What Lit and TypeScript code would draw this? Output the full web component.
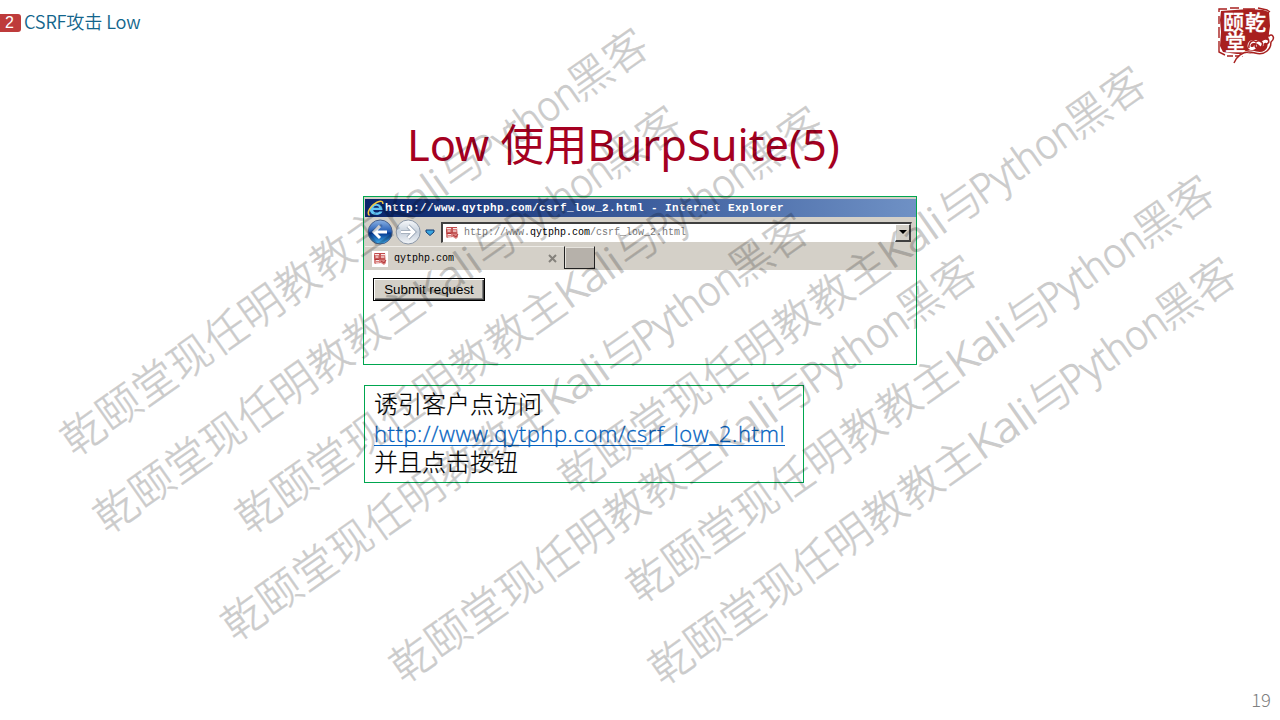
import { LitElement, html, css, svg } from "lit";
import { customElement } from "lit/decorators.js";

// Centre of the first glyph of every watermark line.
const MARKS: [number, number][] = [
  [83, 432], [116, 509.5], [258, 510], [243.5, 617],
  [412, 659], [581, 470], [649, 579], [671, 661],
];
const ANGLE = -35.1;

@customElement("site-seal")
export class SiteSeal extends LitElement {
  static styles = css`:host { display: block; } svg { display: block; }
    text { font-family: "Noto Sans CJK SC", sans-serif; font-weight: 500; fill: #fff; stroke: #fff; stroke-width: 0.3px; }`;
  render() {
    return html`<svg width="62" height="58" viewBox="0 0 62 58">
      <path d="M6 5L20 4L34 3L48 4L54 6L55 20L53 34L56 38L52 46L44 48L22 48L8 46L5 40L6 26L5 14Z" fill="#a8201f"/>
      <path d="M4 6L4 3H12M15 2H24M28 3H40M43 2L52 4L55 6M4 10V18M4 21V32M4 35L4 46L10 49M12 50H18M20 50H28" fill="none" stroke="#a8201f" stroke-width="1.4"/>
      <text x="8" y="24" font-size="21">颐</text>
      <text x="30" y="24" font-size="21">乾</text>
      <text x="10" y="44" font-size="21">堂</text>
      <path d="M22 56C26 46 34 45 41 47C48 49 54 45 54 39C53 33 46 35 47 40C42 33 34 35 34 40C34 44 42 43 40 39" fill="none" stroke="#fff" stroke-width="3"/>
      <path d="M19 57C23 48 30 44 40 47C50 50 56 43 56 36C61 32 57 27 54 30C52 26 47 28 47 32M34 42C33 36 38 33 41 36C45 33 50 37 46 41C43 44 38 41 41 38M50 32C55 31 55 39 50 38" fill="none" stroke="#a8201f" stroke-width="1.5"/>
    </svg>`;
  }
}

@customElement("seal-icon")
export class SealIcon extends LitElement {
  static styles = css`:host { display: block; flex: none; } svg { display: block; }`;
  render() {
    return html`<svg width="16" height="16" viewBox="0 0 16 16">
      <rect width="16" height="16" fill="#fff"/>
      <path d="M2 2H13L14 12L12 14L9 12L3 13L2 12Z" fill="#d8817f"/>
      <path d="M3 3.5H7M4 6H6M9 3.5H13M9 6H12M4 9.5H7M4 12H7" stroke="#fbe4e4" stroke-width="1"/>
      <path d="M8 2V8H2M8 8L13 8M3 8.5L7 8.5M9 10L12 12L14 9" fill="none" stroke="#b23335" stroke-width="1"/>
      <path d="M3 2.5L13 2.5M2.5 4V7" stroke="#c04a4b" stroke-width="1"/>
    </svg>`;
  }
}

@customElement("browser-shot")
export class BrowserShot extends LitElement {
  static styles = css`
    :host { display: block; box-sizing: border-box; width: 554px; height: 169px; border: 1px solid #00a64f; background: #fff; font-family: "Liberation Mono", monospace; white-space: nowrap; }
    .frame { background: #d4d0c8; height: 73px; padding: 2px 0 0 1px; box-sizing: border-box; }
    .title { height: 18px; display: flex; align-items: center; background: linear-gradient(90deg, #0a246a, #3a5b9b 48%, #6f91c5); color: #fff; }
    .title svg { display: block; flex: none; margin-left: 2px; }
    .caption { font-weight: 700; font-size: 11px; letter-spacing: 0.4px; line-height: 18px; }
    .bar { height: 29px; display: flex; align-items: center; padding-left: 2px; }
    .nav { display: block; flex: none; }
    .address { box-sizing: border-box; width: 471px; height: 21px; margin: 1px 0 0 5px; background: #fff; border: 2px solid #404040; border-right: 1px solid #d4d0c8; border-bottom: 1px solid #d4d0c8; display: flex; align-items: center; padding-left: 1px; }
    .url { flex: 1; margin-left: 4px; font-size: 10px; line-height: 17px; color: #777; }
    .url b { font-weight: 400; color: #000; }
    .drop { box-sizing: border-box; width: 16px; height: 18px; background: #d4d0c8; border: 1px solid #fff; border-right: 2px solid #404040; border-bottom: 2px solid #404040; display: grid; place-items: center; }
    .tabs { display: flex; height: 24px; }
    .tab { width: 199px; display: flex; align-items: center; padding-left: 7px; box-sizing: border-box; border-top: 1px solid #eeece7; }
    .name { flex: 1; font-size: 10px; margin-left: 6px; line-height: 24px; color: #000; }
    .close { margin-right: 7px; display: block; }
    .new { width: 31px; height: 23px; box-sizing: border-box; background: #b6b1aa; border: 1px solid #d4d0c8; border-left: 1px solid #222; border-right: 1px solid #222; border-bottom: 1px solid #222; box-shadow: inset 1px 1px #e6e3dd; }
    .page { padding: 8px 0 0 9px; }
    .submit { box-sizing: border-box; width: 112px; height: 23px; border: 1px solid #000; background: #d4d0c8; box-shadow: inset 1px 1px #fff, inset -1px -1px #404040, inset -2px -2px #808080; font: 13.33px/21px "Liberation Sans", sans-serif; color: #000; text-align: center; }
  `;
  render() {
    return html`
      <div class="frame">
        <div class="title">
          <svg width="18" height="17" viewBox="0 0 18 17">
            <path d="M15.5 10H6.2C6.4 13 11.5 13.2 12.2 11.5H15.4C14 16.4 2.6 16.6 2.8 9.2C3 2.2 16 2.2 15.5 10ZM6.4 7.7H12.2C11.8 5 6.9 5 6.4 7.7Z" fill="#62c6f5" fill-rule="evenodd"/>
            <path d="M2.5 15.5C-1 13 4 5 10 2.2C13.5 .8 16.3 .8 15.8 4" fill="none" stroke="#f5c83c" stroke-width="1.5"/>
          </svg>
          <span class="caption">http://www.qytphp.com/csrf_low_2.html - Internet Explorer</span>
        </div>
        <div class="bar">
          <svg class="nav" width="69" height="28" viewBox="0 0 69 28">
            <defs>
              <linearGradient id="b" x2="0" y2="1"><stop stop-color="#8bb2e4"/><stop offset=".48" stop-color="#265eb5"/><stop offset=".55" stop-color="#053a91"/><stop offset="1" stop-color="#45b4f1"/></linearGradient>
              <linearGradient id="g" x2="0" y2="1"><stop stop-color="#f7f9fb"/><stop offset=".5" stop-color="#c5cfdb"/><stop offset="1" stop-color="#f2f5f8"/></linearGradient>
            </defs>
            <circle cx="13.2" cy="14" r="12" fill="url(#b)" stroke="#4a628c"/>
            <path d="M13 8L7 14L13 20M7.5 14H20" fill="none" stroke="#fff" stroke-width="3"/>
            <circle cx="41.2" cy="14" r="12" fill="url(#g)" stroke="#8a96a6"/>
            <path d="M41 8L47 14L41 20M34 14H46" fill="none" stroke="#8a98aa" stroke-width="4"/>
            <path d="M41 8L47 14L41 20M34 14H46" fill="none" stroke="#fff" stroke-width="2.6"/>
            <path d="M59 12H67V14L63 17.5L59 14Z" fill="#3aa6e0" stroke="#123d75"/>
          </svg>
          <div class="address">
            <seal-icon></seal-icon>
            <span class="url">http://www.<b>qytphp.com</b>/csrf_low_2.html</span>
            <div class="drop"><svg width="8" height="4"><path d="M0 0H8L4 4Z"/></svg></div>
          </div>
        </div>
        <div class="tabs">
          <div class="tab">
            <seal-icon></seal-icon><span class="name">qytphp.com</span>
            <svg class="close" width="9" height="9"><path d="M1 1L8 8M8 1L1 8" stroke="#85827c" stroke-width="2"/></svg>
          </div>
          <div class="new"></div>
        </div>
      </div>
      <div class="page"><div class="submit">Submit request</div></div>`;
  }
}

@customElement("app-root")
export class AppRoot extends LitElement {
  static styles = css`
    :host { display: block; position: relative; width: 1280px; height: 720px; overflow: hidden; background: #fff; font-family: "Noto Sans", "Noto Sans CJK SC", sans-serif; white-space: nowrap; }
    .slide { display: flex; flex-direction: column; height: 720px; }
    header { display: flex; align-items: flex-start; height: 115px; }
    .num { width: 21px; height: 18px; margin-top: 14px; padding-right: 2px; box-sizing: border-box; background: #be3b3b; border-radius: 0 3px 3px 0; color: #fff; font: 16px/17px "Liberation Sans", sans-serif; text-align: center; }
    .topic { flex: 1; margin: 7px 0 0 3px; font: 350 18.2px/28px "Noto Sans CJK SC", sans-serif; letter-spacing: -0.2px; color: #12658c; }
    site-seal { margin: 6px 3px 0 0; }
    h1 { margin: 0 0 0 407px; height: 81px; font-size: 43.4px; font-weight: 400; line-height: 60px; color: #a50021; }
    browser-shot { margin-left: 363px; flex: none; }
    .note { box-sizing: border-box; width: 440px; height: 98px; margin: 20px 0 0 364px; border: 1px solid #00a64f; padding: 2px 0 0 9px; font: 300 24px/29px "Noto Sans CJK SC", sans-serif; color: #000; -webkit-text-stroke: 0.2px; }
    .note div { height: 29px; }
    .link { display: inline-block; width: 411px; height: 27px; line-height: 29px; font-family: "Open Sans", sans-serif; font-size: 22px; letter-spacing: 0.58px; color: #0563c1; border-bottom: 1px solid #0563c1; box-sizing: border-box; -webkit-text-stroke: 0.3px; }
    footer { margin-top: auto; height: 35px; padding-right: 9px; text-align: right; font: 300 18.5px/28px "Noto Sans CJK SC", sans-serif; color: #808080; }
    .marks { position: absolute; inset: 0; pointer-events: none; }
    .marks text { font: 300 43px "Noto Sans CJK SC", sans-serif; fill: #000; stroke: #000; stroke-width: 0.5px; }
    .marks .latin { font: 300 41px "Open Sans", sans-serif; stroke-width: 1px; }
  `;
  render() {
    return html`
      <div class="slide">
        <header><div class="num">2</div><div class="topic">CSRF攻击 Low</div><site-seal></site-seal></header>
        <h1>Low 使用BurpSuite(5)</h1>
        <browser-shot></browser-shot>
        <div class="note"><div>诱引客户点访问</div><div><span class="link">http://www.qytphp.com/csrf_low_2.html</span></div><div>并且点击按钮</div></div>
        <footer>19</footer>
      </div>
      <svg class="marks" width="1280" height="720">
        ${MARKS.map(([x, y]) => svg`<g opacity="0.2" transform="translate(${x} ${y}) rotate(${ANGLE})">
          <text x="-21.5" y="16" textLength="391" lengthAdjust="spacing">乾颐堂现任明教教主</text>
          <text class="latin" x="369" y="15" textLength="71" lengthAdjust="spacingAndGlyphs">Kali</text>
          <text x="441" y="16">与</text>
          <text class="latin" x="481" y="15" textLength="119" lengthAdjust="spacingAndGlyphs">Python</text>
          <text x="598" y="16" textLength="86" lengthAdjust="spacing">黑客</text>
        </g>`)}
      </svg>`;
  }
}
